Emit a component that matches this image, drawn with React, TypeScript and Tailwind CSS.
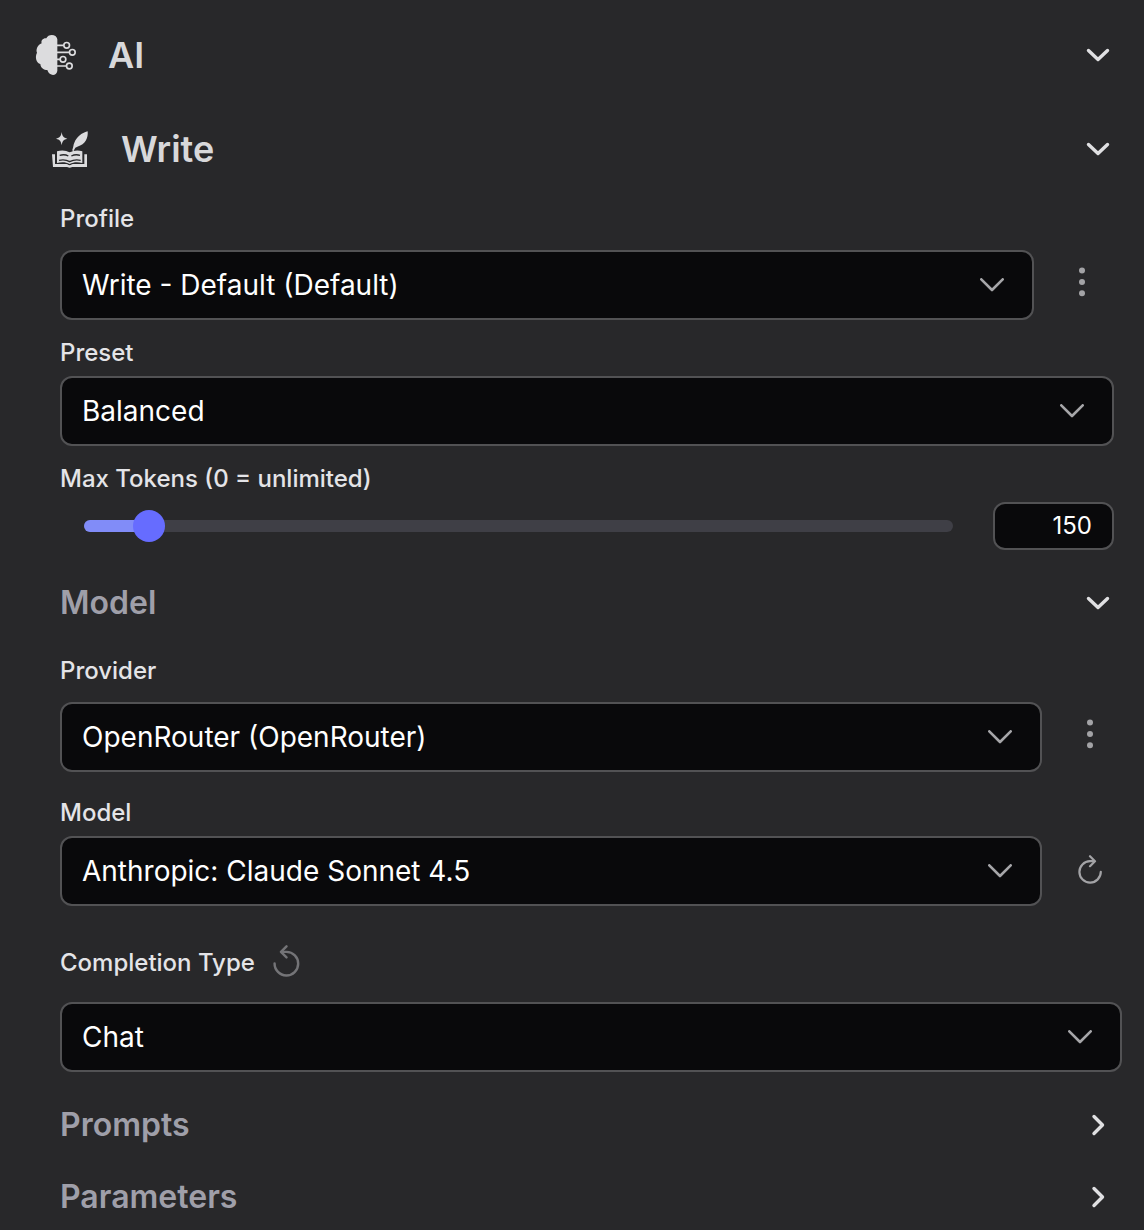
import type { ReactNode } from "react"

interface SelectBoxProps {
  value: string
  className: string
  textClassName?: string
}

interface SectionHeaderProps {
  title: string
  open?: boolean
  className: string
  titleClassName: string
  icon?: ReactNode
}

function BrainIcon() {
  return (
    <svg width="40" height="40" viewBox="48 45 120 120" fill="none" className="shrink-0 overflow-visible text-[#dcdcde]">
      <path
        d="M112 58C110 41 84 41 79 55C69 54 62 62 65 70C52 75 47 90 51 98C44 112 49 129 61 132C62 144 72 150 82 150C88 169 109 169 112 153Z"
        fill="currentColor"
      />
      <g stroke="currentColor" strokeWidth="5">
        <path d="M110 76H131M110 97H148M110 118H120M110 138H139" />
        <circle cx="140" cy="76" r="8.5" />
        <circle cx="157" cy="97" r="8.5" />
        <circle cx="129" cy="118" r="8.5" />
        <circle cx="148" cy="138" r="8.5" />
      </g>
    </svg>
  )
}

function WriteIcon() {
  return (
    <svg width="36" height="37" viewBox="96 330 108 111" fill="none" className="shrink-0 overflow-visible text-[#dcdcde]">
      <path d="M125 333C127 346 130 350 142 353C130 356 127 360 125 373C123 360 120 356 108 353C120 350 123 346 125 333Z" fill="currentColor" />
      <path d="M203 331C205 349 197 371 172 377L166 380L159 393L157 386C160 379 160 371 163 365C170 348 184 336 203 331Z" fill="currentColor" />
      <path d="M96 400H105V429H139C145 429 144 433 149 433C154 433 153 429 159 429H193V400H201V438H160C155 438 154 440 149 440C144 440 143 438 138 438H99Z" fill="currentColor" />
      <path d="M111 391C125 386 139 388 149 394C160 388 174 386 187 391V426C173 422 160 423 149 429C138 423 125 422 111 426Z" fill="currentColor" />
      <path d="M119 403C129 400 138 401 145 405M154 405C162 401 171 400 180 403M117 418C129 415 139 416 149 422C160 416 170 415 182 418" stroke="#28282a" strokeWidth="4" />
    </svg>
  )
}

function Arrow({ open }: { open?: boolean }) {
  return (
    <svg width="32" height="32" viewBox="0 0 32 32" fill="none" className="shrink-0 text-[#e0e0e2]">
      <path
        d={open ? "M6.5 11.5L16 20.5L25.5 11.5" : "M12 7.5L20.5 16L12 24.5"}
        stroke="currentColor"
        strokeWidth="3.4"
        strokeLinecap="round"
        strokeLinejoin="round"
      />
    </svg>
  )
}

function DotsIcon() {
  return (
    <svg width="8" height="30" viewBox="0 0 8 30" className="shrink-0 fill-[#a3a3a6]">
      <circle cx="4" cy="3.6" r="3" />
      <circle cx="4" cy="14.9" r="3" />
      <circle cx="4" cy="26.2" r="3" />
    </svg>
  )
}

function RotateIcon({ className }: { className: string }) {
  return (
    <svg viewBox="0 0 24 29" fill="none" stroke="currentColor" strokeWidth="2.2" strokeLinecap="round" strokeLinejoin="round" className={className}>
      <path d="M16 6.2H12A10.7 10.7 0 1 0 22.8 16.8" />
      <path d="M12 1.2L17 6.2L12 11.2" />
    </svg>
  )
}

function SectionHeader({ title, open, className, titleClassName, icon }: SectionHeaderProps) {
  return (
    <div className={`flex items-center pr-[30px] ${className}`}>
      {icon}
      <h2 className={`leading-none ${titleClassName}`}>{title}</h2>
      <div className="ml-auto">
        <Arrow open={open} />
      </div>
    </div>
  )
}

function Label({ children, className, textClassName }: { children: ReactNode; className: string; textClassName: string }) {
  return (
    <div className={`flex items-center text-2xl leading-none font-medium text-[#e4e4e7] ${className}`}>
      <span className={textClassName}>{children}</span>
    </div>
  )
}

function SelectBox({ value, className, textClassName = "" }: SelectBoxProps) {
  return (
    <button className={`flex h-[70px] shrink-0 items-center justify-between rounded-xl border-2 border-[#525254] bg-[#09090b] pr-7 pl-5 text-[28px] leading-none text-white ${className}`}>
      <span className={`whitespace-nowrap ${textClassName}`}>{value}</span>
      <svg width="24" height="14" viewBox="0 0 24 14" fill="none">
        <path d="M1.3 1.3L12 12L22.7 1.3" stroke="#a6a6a9" strokeWidth="2.6" strokeLinecap="round" strokeLinejoin="round" />
      </svg>
    </button>
  )
}

export default function App() {
  return (
    <div className="h-[1230px] w-[1144px] overflow-hidden bg-[#28282a] font-['Inter',sans-serif]">
      <SectionHeader
        title="AI"
        open
        icon={<BrainIcon />}
        className="h-[110px] pl-9"
        titleClassName="ml-8 text-4xl font-semibold text-[#d8d8da]"
      />
      <SectionHeader
        title="Write"
        open
        icon={<WriteIcon />}
        className="h-[78px] pl-[52px]"
        titleClassName="ml-[33px] text-4xl font-semibold text-[#d8d8da]"
      />

      <div className="pl-[60px]">
        <Label className="h-[62px]" textClassName="">Profile</Label>
        <div className="flex items-center">
          <SelectBox value="Write - Default (Default)" className="w-[974px]" />
          <div className="ml-11 pb-1.5">
            <DotsIcon />
          </div>
        </div>

        <Label className="h-14 pt-2.5" textClassName="">Preset</Label>
        <SelectBox value="Balanced" className="w-[1054px]" />

        <Label className="h-14 pt-2.5" textClassName="">Max Tokens (0 = unlimited)</Label>
        <div className="flex h-12 items-center pl-6">
          <div className="flex h-3 w-[869px] items-center rounded-full bg-[#3f3f46]">
            <div className="h-3 w-[60px] rounded-l-full bg-[#818cf8]" />
            <div className="-ml-[11px] h-8 w-8 shrink-0 rounded-full bg-[#666cff]" />
          </div>
          <div className="ml-10 flex h-12 w-[121px] items-center justify-end rounded-xl border-2 border-[#525254] bg-[#09090b] pr-5 text-2xl leading-none text-white">
            150
          </div>
        </div>
      </div>

      <SectionHeader
        title="Model"
        open
        className="h-[106px] pl-[60px]"
        titleClassName="text-[32px] font-semibold text-[#9f9fa9]"
      />

      <div className="pl-[60px]">
        <Label className="mb-4 h-[30px]" textClassName="">Provider</Label>
        <div className="flex items-center">
          <SelectBox value="OpenRouter (OpenRouter)" className="w-[982px]" />
          <div className="ml-11 pb-1.5">
            <DotsIcon />
          </div>
        </div>

        <Label className="h-16 pt-[18px]" textClassName="">Model</Label>
        <div className="flex items-center">
          <SelectBox value="Anthropic: Claude Sonnet 4.5" className="w-[982px]" />
          <RotateIcon className="mb-1 ml-9 h-[29px] w-6 text-[#a3a3a6]" />
        </div>

        <div className="flex h-24 items-center pt-[18px]">
          <Label className="" textClassName="">Completion Type</Label>
          <RotateIcon className="mb-1 ml-[18px] h-8 w-[27px] -scale-x-100 text-[#747477]" />
        </div>
        <SelectBox value="Chat" className="w-[1062px]" />
      </div>

      <div className="pt-[17px] pl-[60px]">
        <SectionHeader title="Prompts" className="h-[72px]" titleClassName="text-[32px] font-semibold text-[#9f9fa9]" />
        <SectionHeader title="Parameters" className="h-[72px]" titleClassName="text-[32px] font-semibold text-[#9f9fa9]" />
      </div>
    </div>
  )
}
